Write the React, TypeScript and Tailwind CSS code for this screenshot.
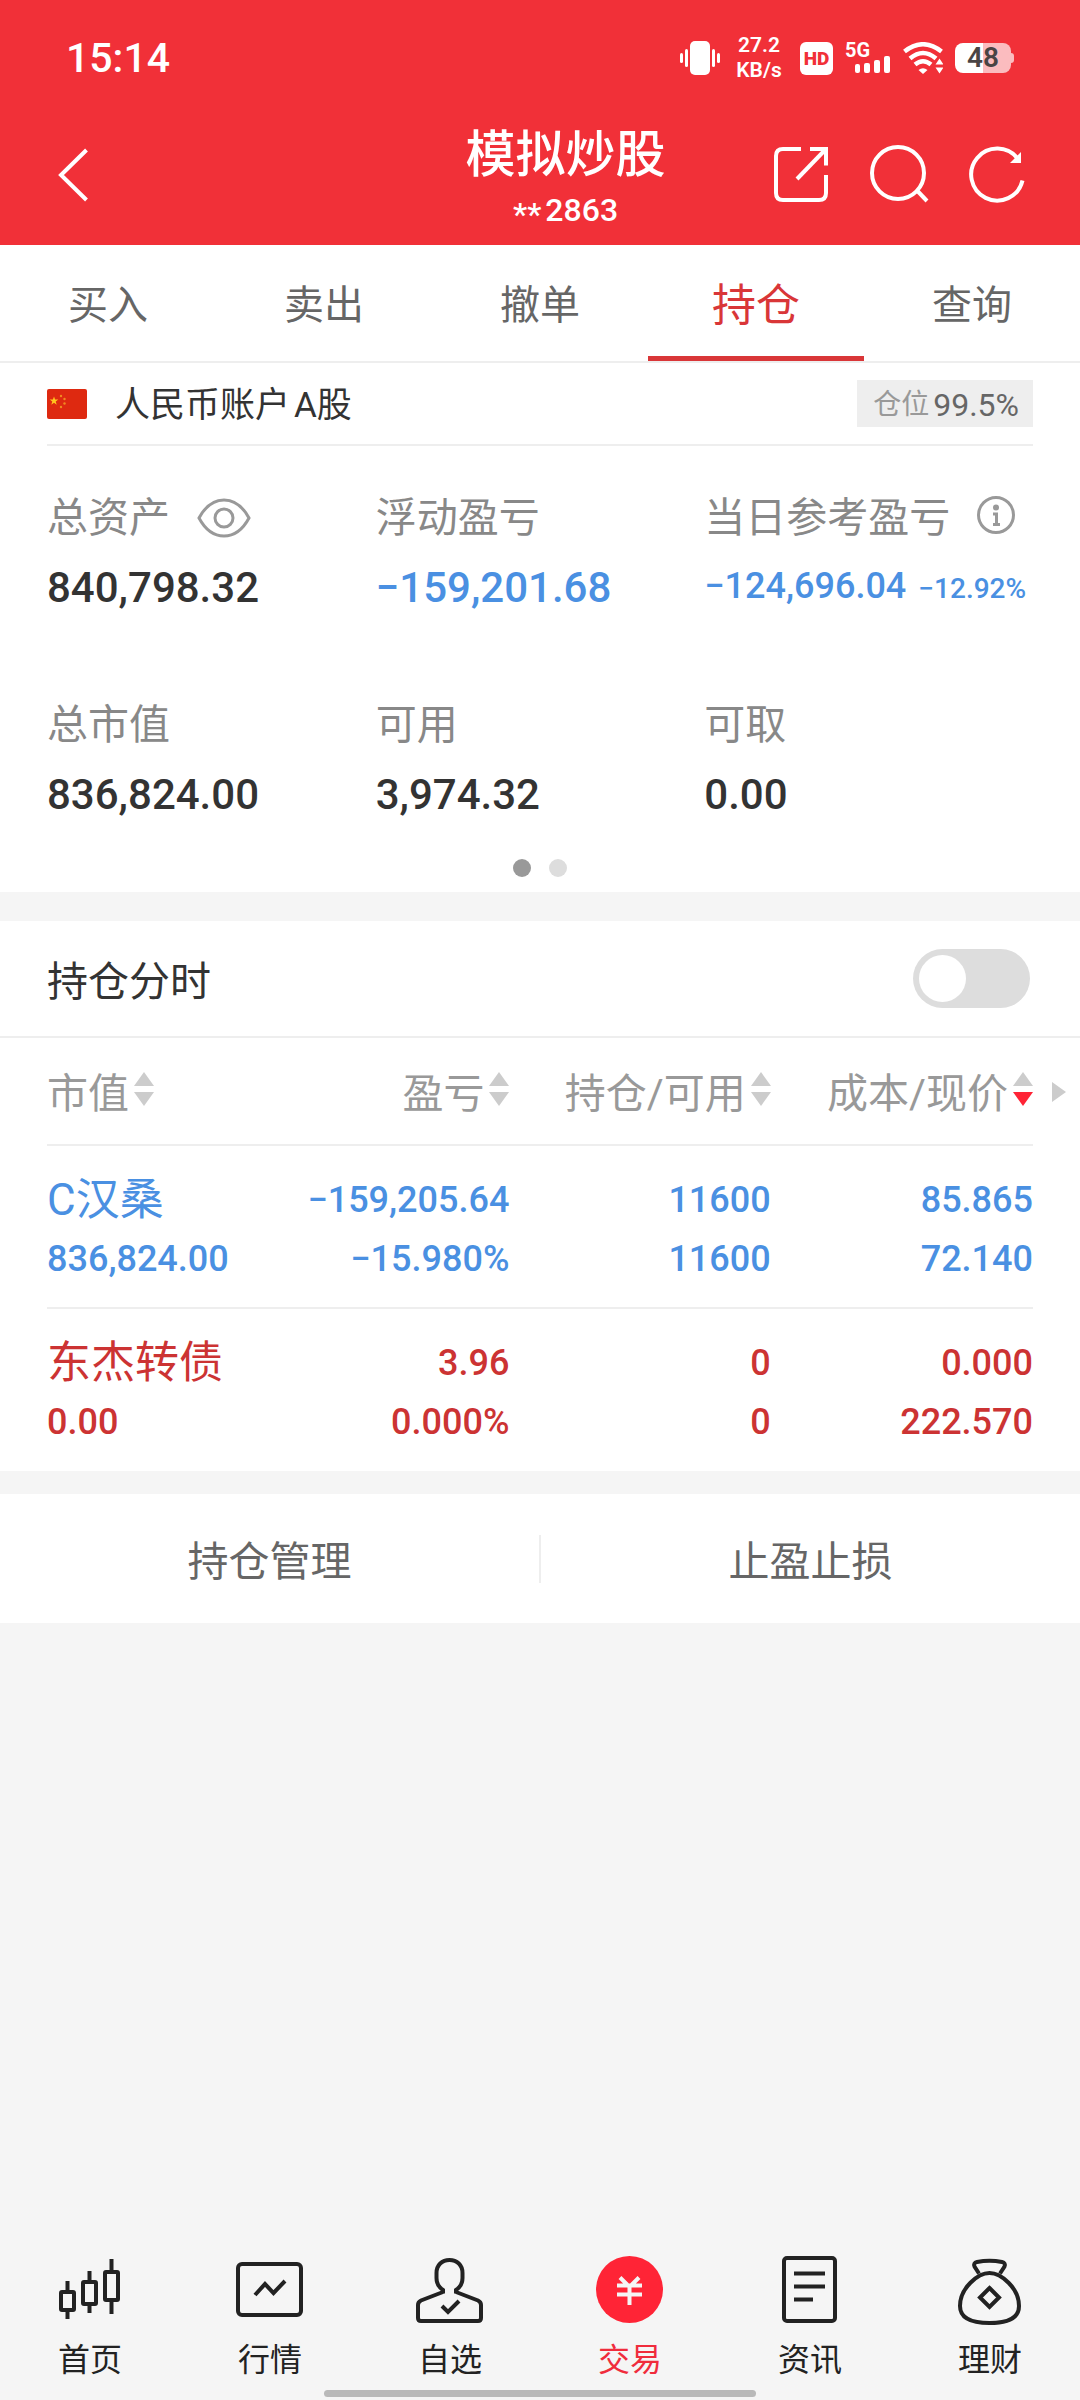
import { useState } from "react";
import type { ReactNode } from "react";

const tabs = ["买入", "卖出", "撤单", "持仓", "查询"];

type Holding = {
  color: string;
  cells: [string, string][];
};

const holdings: Holding[] = [
  {
    color: "text-[#4a90e2]",
    cells: [
      ["C汉桑", "836,824.00"],
      ["−159,205.64", "−15.980%"],
      ["11600", "11600"],
      ["85.865", "72.140"],
    ],
  },
  {
    color: "text-[#cc3333]",
    cells: [
      ["东杰转债", "0.00"],
      ["3.96", "0.000%"],
      ["0", "0"],
      ["0.000", "222.570"],
    ],
  },
];

function StatusBar() {
  return (
    <div className="flex h-[116px] items-center justify-between px-[66px] text-white">
      <span className="text-[41px] font-medium leading-none">15:14</span>
      <div className="flex items-center">
        <svg width="40" height="34" viewBox="0 0 40 34" fill="currentColor" aria-hidden="true">
          <rect x="10" y="0" width="20" height="34" rx="5" />
          <rect x="5" y="8" width="3" height="18" rx="1.5" />
          <rect x="0" y="12" width="3" height="10" rx="1.5" />
          <rect x="32" y="8" width="3" height="18" rx="1.5" />
          <rect x="37" y="12" width="3" height="10" rx="1.5" />
        </svg>
        <p className="ml-4 w-[46px] text-center text-[21px] font-semibold leading-[25px]">
          27.2
          <br />
          KB/s
        </p>
        <div className="ml-[18px] flex h-[33px] w-[33px] items-center justify-center rounded-[6px] bg-white text-[19px] font-black leading-none text-[#f13038]">
          HD
        </div>
        <div className="ml-3 flex h-[34px] w-[46px] flex-col pt-[2px]">
          <span className="text-[20px] font-bold leading-[14px]">5G</span>
          <svg className="-mt-[1px] ml-[10px]" width="35" height="17" viewBox="0 0 35 17" fill="currentColor" aria-hidden="true">
            <rect x="0" y="8" width="5" height="9" rx="2" />
            <rect x="9" y="7" width="6" height="10" rx="2" />
            <rect x="19" y="4" width="6" height="13" rx="2" />
            <rect x="29" y="0" width="6" height="17" rx="2" />
          </svg>
        </div>
        <svg className="ml-3" width="40" height="32" viewBox="0 0 40 32" aria-hidden="true">
          <g fill="none" stroke="currentColor" strokeWidth="4.5">
            <path d="M1.5 9.5 Q20 -5 38.500 9.500" />
            <path d="M7 16.500 Q20 5.500 33 16.500" />
            <path d="M12 22.500 Q20 16 28 22.500" />
          </g>
          <path d="M15.500 28 Q20 24.500 24.500 28 L20 32 Z" fill="currentColor" />
          <path d="M36.500 16.500 l4 6 h-8 z M36.500 31.500 l4 -6 h-8 z" fill="currentColor" />
        </svg>
        <div className="ml-3 flex items-center">
          <div className="flex h-[30px] w-[56px] items-center justify-center rounded-[8px] bg-linear-to-r from-white from-50% to-[#fbbcbf] to-50% text-[28px] font-semibold leading-none text-[#4a4444]">
            48
          </div>
          <div className="h-[10px] w-[3px] rounded-r-[3px] bg-[#fbbcbf]" />
        </div>
      </div>
    </div>
  );
}

function TitleBar() {
  return (
    <div className="grid h-[129px] grid-cols-[1fr_auto_1fr] pl-[58px] pr-[55px] text-white">
      <button type="button" aria-label="返回" className="mt-[32px] h-[54px] w-[32px]">
        <svg width="32" height="54" viewBox="0 0 32 54" fill="none" stroke="currentColor" strokeWidth="4" aria-hidden="true">
          <path d="M28.500 2 L3 27 L28.500 52" />
        </svg>
      </button>
      <div className="flex flex-col items-center pl-[48px] pt-[9px]">
        <h1 className="text-[50px] font-medium leading-[60px]">模拟炒股</h1>
        <p className="flex items-center gap-1 text-[32px] font-medium leading-[42px]">
          <span className="pt-2">**</span>
          <span>2863</span>
        </p>
      </div>
      <div className="mt-[28px] flex h-[60px] items-center justify-end gap-[40px]">
        <button type="button" aria-label="分享">
          <svg width="56" height="58" viewBox="0 0 56 58" fill="none" stroke="currentColor" strokeWidth="4" aria-hidden="true">
            <path d="M28 4 H10 Q3 4 3 11 V48 Q3 55 10 55 H46 Q53 55 53 48 V30" />
            <path d="M37 4 H53 V20.500" />
            <path d="M24 34 L52 5" />
          </svg>
        </button>
        <button type="button" aria-label="搜索">
          <svg width="60" height="58" viewBox="0 0 60 58" fill="none" stroke="currentColor" strokeWidth="4" aria-hidden="true">
            <circle cx="29" cy="28" r="26" />
            <path d="M48 45.500 L58 56" />
          </svg>
        </button>
        <button type="button" aria-label="刷新">
          <svg width="56" height="58" viewBox="0 0 56 58" fill="none" stroke="currentColor" strokeWidth="4" aria-hidden="true">
            <path d="M53.500 35.500 A26 26 0 1 1 49 14" />
            <path d="M52 7 V18 H41 Z" fill="currentColor" stroke="none" />
          </svg>
        </button>
      </div>
    </div>
  );
}

function Flag() {
  return (
    <svg width="40" height="30" viewBox="0 0 40 30" role="img" aria-label="中国">
      <rect width="40" height="30" rx="2" fill="#de2910" />
      <path
        d="M7 7.500 l1.100 3 h3.200 l-2.600 2 1 3.200 -2.700 -1.900 -2.700 1.900 1 -3.200 -2.600 -2 h3.200z"
        fill="#ffc61e"
      />
      <g fill="#f08a20">
        <circle cx="14" cy="7" r="1.200" />
        <circle cx="17.500" cy="10" r="1.200" />
        <circle cx="17.500" cy="14.500" r="1.200" />
        <circle cx="14" cy="18" r="1.200" />
      </g>
    </svg>
  );
}

function Metric({
  label,
  extra,
  children,
}: {
  label: string;
  extra?: ReactNode;
  children: ReactNode;
}) {
  return (
    <div className="min-w-0 whitespace-nowrap">
      <dt className="flex h-[60px] items-center text-[41px] leading-[60px] text-[#888888]">
        {label}
        {extra}
      </dt>
      <dd className="mt-[10px] h-[60px] leading-[60px]">{children}</dd>
    </div>
  );
}

function SortIcon({ down = false }: { down?: boolean }) {
  return (
    <svg className="shrink-0" width="20" height="34" viewBox="0 0 20 34" aria-hidden="true">
      <path d="M10 0 L20 14 H0 Z" fill="#cccccc" />
      <path d="M10 34 L20 20 H0 Z" fill={down ? "#ff2436" : "#cccccc"} />
    </svg>
  );
}

const columns = [
  { label: "市值", width: "w-[20.5%]", down: false },
  { label: "盈亏", width: "w-[26.4%]", down: false },
  { label: "持仓/可用", width: "w-[26.5%]", down: false },
  { label: "成本/现价", width: "w-[26.6%]", down: true },
];

function HoldingsTable() {
  return (
    <div className="relative px-[47px]">
      <table className="w-full table-fixed border-collapse whitespace-nowrap">
        <thead>
          <tr className="border-b-2 border-[#eeeeee]">
            {columns.map((c, i) => (
              <th key={c.label} scope="col" className={c.width + " h-[107px] p-0 font-normal"}>
                <button
                  type="button"
                  className={
                    "flex w-full items-center gap-[5px] pb-1 text-[41px] leading-[60px] text-[#999999] " +
                    (i === 0 ? "justify-start" : "justify-end")
                  }
                >
                  <span className="pt-[10px]">{c.label}</span>
                  <SortIcon down={c.down} />
                </button>
              </th>
            ))}
          </tr>
        </thead>
        <tbody>
          {holdings.map((h) => (
            <tr key={h.cells[0][0]} className={"border-b-2 border-[#eeeeee] last:border-b-0 " + h.color}>
              {h.cells.map(([top, bottom], i) => (
                <td key={i} className={"h-[163px] p-0 align-top " + (i === 0 ? "text-left" : "text-right")}>
                  <div
                    className={
                      i === 0
                        ? "pt-[25px] text-[44px] font-normal leading-[59px]"
                        : "pt-[25px] text-[36px] font-medium leading-[59px]"
                    }
                  >
                    {top}
                  </div>
                  <div className="text-[36px] font-medium leading-[59px]">{bottom}</div>
                </td>
              ))}
            </tr>
          ))}
        </tbody>
      </table>
      <button type="button" aria-label="更多列" className="absolute right-[14px] top-[44px]">
        <svg width="14" height="20" viewBox="0 0 14 20" aria-hidden="true">
          <path d="M0 0 L14 10 L0 20 Z" fill="#cccccc" />
        </svg>
      </button>
    </div>
  );
}

const navItems: { label: string; icon: ReactNode; active?: boolean }[] = [
  {
    label: "首页",
    icon: (
      <g>
        <rect x="5" y="37" width="13" height="18" rx="1" />
        <path d="M11.500 26 V36 M11.500 56 V64" />
        <rect x="27" y="27" width="13" height="22" rx="1" />
        <path d="M33.500 16 V26 M33.500 50 V58" />
        <rect x="49" y="17" width="13" height="28" rx="1" />
        <path d="M55.500 4 V16 M55.500 46 V59" />
      </g>
    ),
  },
  {
    label: "行情",
    icon: (
      <g>
        <rect x="2" y="9" width="63" height="51" rx="4" />
        <path d="M19 40 L29 29 L37.500 38 L49 26" />
      </g>
    ),
  },
  {
    label: "自选",
    icon: (
      <g>
        <path d="M27 38.500 V35 C22.500 32 20.500 28 20.500 23 V18 C20.500 10 26 5 33.500 5 C41 5 46.500 10 46.500 18 V23 C46.500 28 44.500 32 40 35 V38.500" />
        <path d="M27 37 L5 45.500 Q2 47 2 50 V63 Q2 66 5 66 H62 Q65 66 65 63 V50 Q65 47 62 45.500 L40 37" />
        <path d="M26 51 L32 57 L43 46" />
      </g>
    ),
  },
  {
    label: "交易",
    active: true,
    icon: (
      <g>
        <circle cx="33.500" cy="34.500" r="33.500" fill="#ff2436" stroke="none" />
        <path d="M24 22.500 L33.500 32 L43 22.500 M21 30.500 H46 M21 39.500 H46 M33.500 31 V50" stroke="#f5f5f5" />
      </g>
    ),
  },
  {
    label: "资讯",
    icon: (
      <g>
        <rect x="8" y="3" width="51" height="63" rx="3" />
        <path d="M18 18.500 H49 M18 31.500 H49 M18 44.500 H37" />
      </g>
    ),
  },
  {
    label: "理财",
    icon: (
      <g>
        <path d="M33.500 18 C45 18 63 33 63 51 C63 64 51 68 33.500 68 C16 68 4 64 4 51 C4 33 22 18 33.500 18 Z" />
        <path d="M23 18.500 L18.500 11.500 Q17 8 21 7 Q33.500 4.500 46 7 Q50 8 48.500 11.500 L44 18.500" />
        <path d="M33.500 33 L43 42.500 L33.500 52 L24 42.500 Z" />
      </g>
    ),
  },
];

function BottomNav() {
  return (
    <nav className="mt-auto">
      <ul className="grid grid-cols-6">
        {navItems.map((n) => (
          <li key={n.label}>
            <a
              href="#"
              aria-current={n.active ? "page" : undefined}
              className={
                "flex flex-col items-center text-[32px] leading-[48px] " +
                (n.active ? "text-[#f02c3c]" : "text-[#222222]")
              }
            >
              <svg
                width="68"
                height="71"
                viewBox="0 0 68 71"
                fill="none"
                stroke="currentColor"
                strokeWidth="4"
                aria-hidden="true"
              >
                {n.icon}
              </svg>
              <span className="mt-[10px]">{n.label}</span>
            </a>
          </li>
        ))}
      </ul>
      <div className="mx-auto mb-[3px] mt-[6px] h-[7px] w-2/5 rounded-full bg-[#b9b9b9]" />
    </nav>
  );
}

export default function App() {
  const [tab, setTab] = useState("持仓");
  const [chart, setChart] = useState(false);

  return (
    <div className="flex min-h-screen flex-col bg-[#f5f5f5] [font-family:Roboto,'Noto_Sans_CJK_SC',sans-serif]">
      <header className="bg-[#f13038]">
        <StatusBar />
        <TitleBar />
      </header>

      <main>
        <div className="flex h-[118px] border-b-2 border-[#eeeeee] bg-white" role="tablist">
          {tabs.map((t) => (
            <button
              key={t}
              type="button"
              role="tab"
              aria-selected={t === tab}
              onClick={() => setTab(t)}
              className={
                "flex-1 border-b-[5px] pt-[11px] leading-[60px] " +
                (t === tab
                  ? "border-[#d93638] text-[44px] text-[#d93638]"
                  : "border-transparent text-[40px] text-[#666666]")
              }
            >
              {t}
            </button>
          ))}
        </div>

        <section className="bg-white px-[47px] pb-[15px]">
          <div className="flex h-[83px] items-center border-b-2 border-[#eeeeee]">
            <Flag />
            <h2 className="ml-[28px] pt-[5px] text-[35px] leading-[50px] text-[#333333]">
              人民币账户<span className="ml-1">A股</span>
            </h2>
            <div className="ml-auto flex h-[47px] items-center gap-1 bg-[#eeeeee] pl-4 pr-[14px] pt-[3px] text-[28px] leading-[44px] text-[#999999]">
              仓位
              <span className="text-[32px] text-[#666666]">99.5%</span>
            </div>
          </div>

          <dl className="grid grid-cols-3 gap-y-[77px] pt-[42px] text-[42px] font-medium text-[#333333] [&_dt]:font-normal">
            <Metric
              label="总资产"
              extra={
                <button type="button" aria-label="隐藏金额" className="ml-[27px]">
                  <svg width="54" height="40" viewBox="0 0 54 40" fill="none" stroke="#999999" strokeWidth="3" aria-hidden="true">
                    <path d="M2 20 C9 7 18 2 27 2 C36 2 45 7 52 20 C45 33 36 38 27 38 C18 38 9 33 2 20 Z" />
                    <circle cx="27" cy="20" r="9" />
                  </svg>
                </button>
              }
            >
              840,798.32
            </Metric>
            <Metric label="浮动盈亏">
              <span className="text-[#4a90e2]">−159,201.68</span>
            </Metric>
            <Metric
              label="当日参考盈亏"
              extra={
                <button type="button" aria-label="说明" className="mb-[7px] ml-[27px]">
                  <svg width="38" height="38" viewBox="0 0 38 38" fill="none" stroke="#999999" strokeWidth="3" aria-hidden="true">
                    <circle cx="19" cy="19" r="17.500" />
                    <circle cx="19" cy="11.500" r="3" fill="#999999" stroke="none" />
                    <path d="M16 18 H19.500 V28 M16 28.500 H23" />
                  </svg>
                </button>
              }
            >
              <div className="flex items-baseline gap-3 text-[36px] leading-[56px] text-[#4a90e2]">
                <span>−124,696.04</span>
                <span className="text-[28px]">−12.92%</span>
              </div>
            </Metric>
            <Metric label="总市值">836,824.00</Metric>
            <Metric label="可用">3,974.32</Metric>
            <Metric label="可取">0.00</Metric>
          </dl>

          <div className="mt-[34px] flex justify-center gap-[18px]">
            <button type="button" aria-label="第1页" className="h-[18px] w-[18px] rounded-full bg-[#999999]" />
            <button type="button" aria-label="第2页" className="h-[18px] w-[18px] rounded-full bg-[#dddddd]" />
          </div>
        </section>

        <section className="mt-[29px] bg-white">
          <label className="flex h-[117px] items-center justify-between border-b-2 border-[#eeeeee] pl-[47px] pr-[50px] text-[41px] leading-[60px] text-[#333333]">
            <span className="pt-[6px]">持仓分时</span>
            <input
              type="checkbox"
              role="switch"
              checked={chart}
              onChange={(e) => setChart(e.target.checked)}
              className="h-[59px] w-[117px] appearance-none rounded-full bg-[#dddddd] p-[6px] before:block before:h-[47px] before:w-[47px] before:rounded-full before:bg-white checked:bg-[#f13038] checked:before:ml-auto"
            />
          </label>
          <HoldingsTable />
        </section>

        <div className="mt-[23px] flex h-[129px] items-center bg-white text-[41px] leading-[60px] text-[#666666]">
          <button type="button" className="flex-1 pt-[6px]">
            持仓管理
          </button>
          <div className="h-[48px] w-[2px] bg-[#eeeeee]" />
          <button type="button" className="flex-1 pt-[6px]">
            止盈止损
          </button>
        </div>
      </main>

      <BottomNav />
    </div>
  );
}
